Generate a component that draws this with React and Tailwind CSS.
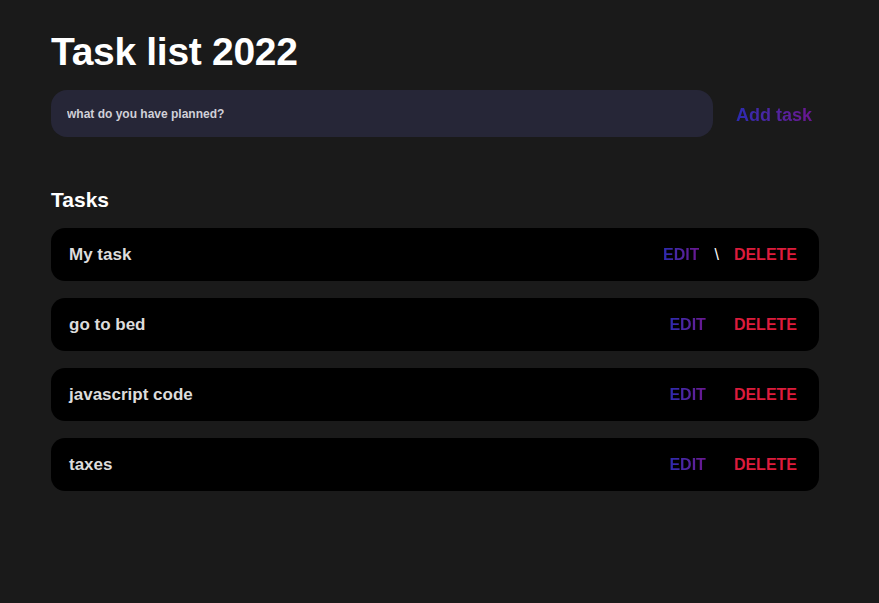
import React, { useState } from "react";

const initialTasks = ["My task", "go to bed", "javascript code", "taxes"];

const gradientText =
  "bg-gradient-to-r from-[#2a2ab0] to-[#6a1490] bg-clip-text text-transparent";

export default function App() {
  const [tasks] = useState(initialTasks);
  const [value, setValue] = useState("");

  return (
    <div
      className="min-h-screen bg-[#1a1a1a] text-white"
      style={{ fontFamily: '"Liberation Sans", Arial, sans-serif' }}
    >
      <div className="w-[768px] pl-[51px] pt-[29px] box-content">
        <h1 className="text-[39px] font-bold leading-[46px] tracking-[-0.3px]">
          Task list 2022
        </h1>

        {/* New task form */}
        <div className="mt-[15px] flex items-center">
          <input
            value={value}
            onChange={(e) => setValue(e.target.value)}
            placeholder="what do you have planned?"
            className="h-[47px] w-[662px] rounded-[16px] bg-[#262637] px-[16px] text-[12px] font-bold text-[#d8d8d8] outline-none placeholder:text-[#d0d0d8]"
          />
          <button
            className={`ml-[23px] mt-[4px] text-[18px] font-bold ${gradientText}`}
          >
            Add task
          </button>
        </div>

        <h2 className="mt-[50px] text-[21px] font-bold leading-[26px]">
          Tasks
        </h2>

        <div className="mt-[15px] flex flex-col gap-[17px]">
          {tasks.map((task, i) => (
            <div
              key={task}
              className="flex h-[53px] items-center justify-between rounded-[14px] bg-black pl-[18px] pr-[22px]"
            >
              <span className="mt-[1px] text-[17px] font-bold text-[#dcdcdc]">
                {task}
              </span>
              <div className="mt-[1px] flex items-center text-[16px] font-bold">
                <button className={gradientText}>EDIT</button>
                {i === 0 ? (
                  <span className="mx-[15px] text-white font-normal">\</span>
                ) : (
                  <span className="w-[28px]" />
                )}
                <button className="text-[#dc1c3c]">DELETE</button>
              </div>
            </div>
          ))}
        </div>
      </div>
    </div>
  );
}
